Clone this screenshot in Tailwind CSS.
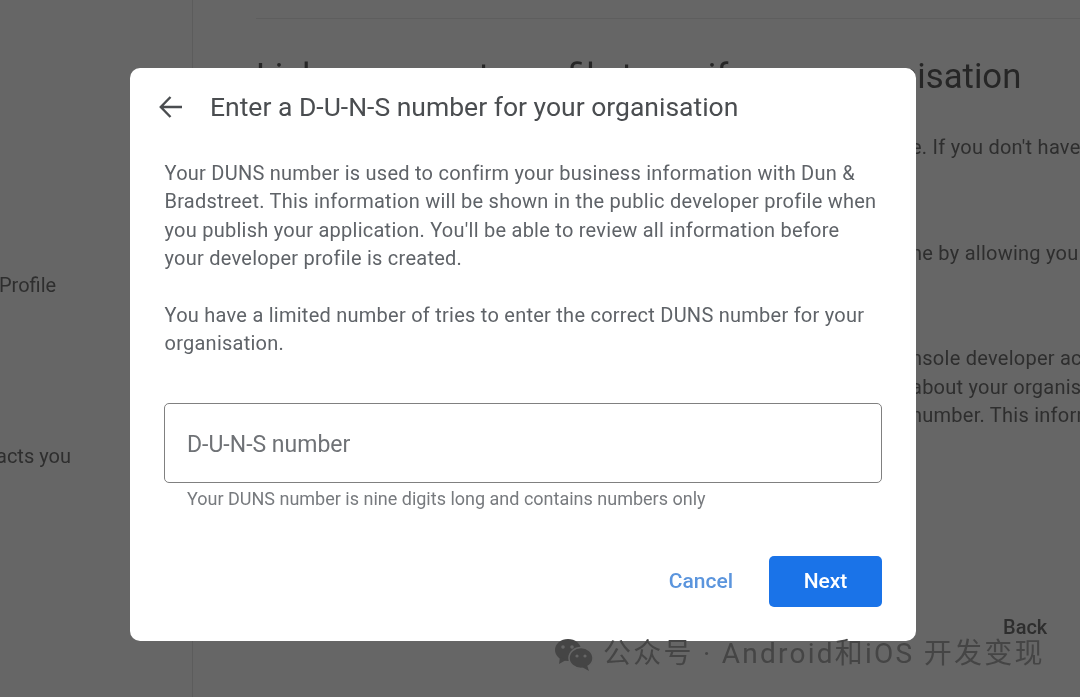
<!DOCTYPE html>
<html lang="en">
<head>
  <meta charset="UTF-8" />
  <title>D-U-N-S number</title>
  <script src="https://cdn.jsdelivr.net/npm/@tailwindcss/browser@4"></script>
</head>
<body class="bg-[#666666] font-['Roboto','Noto_Sans_CJK_SC',sans-serif]">
  <div class="relative w-[1080px] h-[697px] overflow-hidden blur-[0.6px]">
    <!-- Page behind the overlay -->
    <div class="flex h-full text-[#2e2e2e]">
      <aside class="w-[193px] shrink-0 border-r border-[#5c5c5c] pt-[273px] text-[20px] leading-[24px] whitespace-nowrap">
        <p class="-ml-[1px]">Profile</p>
        <p class="mt-[147px] -ml-[4px]">acts you</p>
      </aside>
      <main class="flex-1 min-w-0 pl-[63px] pt-[18px] whitespace-nowrap">
        <div class="border-t border-[#5e5e5e]"></div>
        <h1 class="mt-[37px] text-[34.7px] leading-[40px] text-[#262626]">Link a payments profile to verify your organisation</h1>
        <p class="mt-[37px] pl-[655px] text-[20px] leading-[28px] tracking-[0.25px]">e. If you don't have</p>
        <p class="mt-[78px] pl-[655px] text-[20px] leading-[28px] tracking-[0.25px]">ne by allowing you</p>
        <div class="mt-[77px] pl-[655px] text-[20px] leading-[28.5px] tracking-[0.25px]">
          <p>nsole developer acc</p>
          <p>about your organisa</p>
          <p>number. This inform</p>
        </div>
        <p class="mt-[185px] pl-[747px] text-[20px] leading-[24px] font-medium">Back</p>
      </main>
    </div>

    <!-- Dialog -->
    <div class="absolute left-[130px] top-[68px] w-[786px] h-[573px] bg-white rounded-[10px] pl-[34px] pr-[34px] pt-[22px] text-[#5f6368]">
      <div class="flex items-center h-[34px]">
        <svg class="w-[26px] h-[26px] -ml-[6px] mr-[26px] shrink-0" viewBox="0 0 26 26" fill="none" stroke="#4a4d50" stroke-width="2.4">
          <path d="M24 13H3M12.5 3 2.8 13l9.7 10" />
        </svg>
        <h2 class="text-[26.5px] leading-[34px] text-[#4a4d50] whitespace-nowrap">Enter a D-U-N-S number for your organisation</h2>
      </div>
      <div class="mt-[34.5px] pl-[0.5px] text-[20px] leading-[28.5px] tracking-[0.25px] whitespace-nowrap">
        <p>Your DUNS number is used to confirm your business information with Dun &amp;<br />Bradstreet. This information will be shown in the public developer profile when<br />you publish your application. You'll be able to review all information before<br />your developer profile is created.</p>
        <p class="mt-[28px]">You have a limited number of tries to enter the correct DUNS number for your<br />organisation.</p>
      </div>
      <div class="mt-[45.5px] h-[80px] rounded-[5px] border-[1.5px] border-[#808080] flex items-center pl-[22px] pt-[4px] text-[23px] text-[#6f7276]">D-U-N-S number</div>
      <p class="mt-[5px] pl-[23px] text-[18px] leading-[22px] text-[#777a7e]">Your DUNS number is nine digits long and contains numbers only</p>
      <div class="mt-[46px] flex justify-end items-center gap-[36px]">
        <button class="text-[21px] font-medium text-[#5b95dd]">Cancel</button>
        <button class="w-[113px] h-[51px] rounded-[5px] bg-[#1a73e8] text-white text-[21px] font-medium">Next</button>
      </div>
    </div>

    <!-- Watermark -->
    <div class="absolute left-[554px] top-[636px] flex items-center gap-[9px] text-[#454545] text-[28px] leading-[36px] tracking-[2.25px] whitespace-nowrap">
      <svg class="w-[40px] h-[34px]" viewBox="0 0 40 34" fill="#454545">
        <ellipse cx="14" cy="13" rx="13" ry="11" />
        <path d="M6 20l-1 7 7-4z" />
        <ellipse cx="27" cy="21" rx="12" ry="10.5" stroke="#666666" stroke-width="1.5" />
        <path d="M33 28l2 6-7-4z" />
        <circle cx="9" cy="10" r="1.8" fill="#666666" />
        <circle cx="18" cy="10" r="1.8" fill="#666666" />
        <circle cx="23" cy="19" r="1.6" fill="#666666" />
        <circle cx="31" cy="19" r="1.6" fill="#666666" />
      </svg>
      <span>公众号 · Android和iOS 开发变现</span>
    </div>
  </div>
</body>
</html>
